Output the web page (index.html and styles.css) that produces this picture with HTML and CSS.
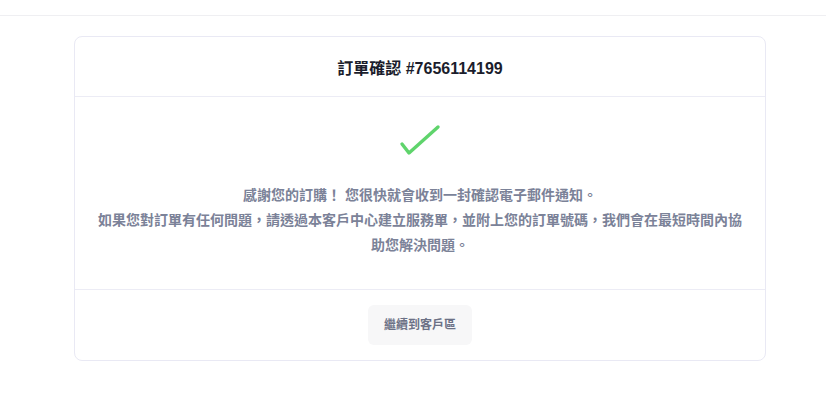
FILE: index.html
```html
<!DOCTYPE html>
<html lang="zh-tw">
<head>
    <meta charset="UTF-8">
    <meta name="viewport" content="width=device-width, initial-scale=1.0">
    <title>訂單確認</title>
    <link rel="stylesheet" href="styles.css">
</head>
<body>
    <div class="topbar"></div>
    <div class="page">
        <div class="card">
            <div class="card-header">
                <h2>訂單確認 #7656114199</h2>
            </div>
            <div class="card-body">
                <svg class="check" width="44" height="34" viewBox="0 0 44 34">
                    <polyline points="4,21 11,30 40,4" fill="none" stroke="#5fd46c" stroke-width="3.4" stroke-linecap="round" stroke-linejoin="round"/>
                </svg>
                <p class="message">
                    感謝您的訂購！ 您很快就會收到一封確認電子郵件通知。<br>
                    如果您對訂單有任何問題，請透過本客戶中心建立服務單，並附上您的訂單號碼，我們會在最短時間內協助您解決問題。
                </p>
            </div>
            <div class="card-footer">
                <a href="#" class="btn">繼續到客戶區</a>
            </div>
        </div>
    </div>
</body>
</html>
```

FILE: styles.css
```css
body {
    font-family: "Liberation Sans", "Noto Sans CJK TC", sans-serif;
    margin: 0;
    background-color: #ffffff;
}
.topbar {
    height: 15px;
    border-bottom: 1px solid #efeff2;
}
.page {
    padding: 20px 60px 0 74px;
}
.card {
    border: 1px solid #e9e9f4;
    border-radius: 8px;
    text-align: center;
}
.card-header {
    height: 59px;
    display: flex;
    align-items: center;
    justify-content: center;
    border-bottom: 1px solid #ececf5;
}
.card-header h2 {
    margin: 0;
    font-size: 16px;
    font-weight: bold;
    color: #1b1d2c;
}
.card-body {
    padding: 26px 22px 31px;
    border-bottom: 1px solid #ececf5;
}
.check {
    display: block;
    margin: 0 auto 26px;
}
.message {
    margin: 0;
    font-size: 14px;
    line-height: 25px;
    font-weight: bold;
    color: #7b8298;
}
.card-footer {
    padding: 15px 0 15px;
}
.btn {
    display: inline-block;
    height: 40px;
    line-height: 40px;
    padding: 0 16px;
    font-size: 12px;
    font-weight: bold;
    color: #6c7186;
    background-color: #f7f7f8;
    border-radius: 6px;
    text-decoration: none;
}
```
